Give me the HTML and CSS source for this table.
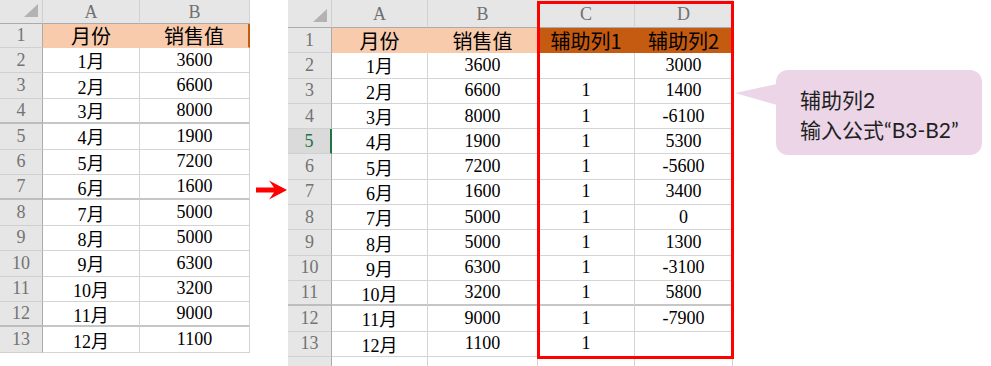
FILE: index.html
```html
<!DOCTYPE html>
<html lang="zh-CN">
<head>
<meta charset="utf-8">
<title>辅助列</title>
<link rel="stylesheet" href="styles.css">
</head>
<body>
<div class="page">
  <div class="sheet sheet-left">
    <div class="corner"><span class="tri"></span></div><div class="colh">A</div><div class="colh">B</div>
    <div class="rowh">1</div><div class="cell hdr">月份</div><div class="cell hdr hdr-edge">销售值</div>
    <div class="rowh">2</div><div class="cell">1月</div><div class="cell">3600</div>
    <div class="rowh">3</div><div class="cell">2月</div><div class="cell">6600</div>
    <div class="rowh thick">4</div><div class="cell thick">3月</div><div class="cell thick">8000</div>
    <div class="rowh">5</div><div class="cell">4月</div><div class="cell">1900</div>
    <div class="rowh">6</div><div class="cell">5月</div><div class="cell">7200</div>
    <div class="rowh thick">7</div><div class="cell thick">6月</div><div class="cell thick">1600</div>
    <div class="rowh">8</div><div class="cell">7月</div><div class="cell">5000</div>
    <div class="rowh">9</div><div class="cell">8月</div><div class="cell">5000</div>
    <div class="rowh">10</div><div class="cell">9月</div><div class="cell">6300</div>
    <div class="rowh">11</div><div class="cell">10月</div><div class="cell">3200</div>
    <div class="rowh thick">12</div><div class="cell thick">11月</div><div class="cell thick">9000</div>
    <div class="rowh">13</div><div class="cell">12月</div><div class="cell">1100</div>
  </div>

  <div class="arrow-gap">
    <svg class="arrow" width="32" height="22" viewBox="0 0 32 22">
      <polygon points="0,8.5 18,8.5 13,1.5 31,11 13,20.5 18,13.5 0,13.5" fill="#ff0000"/>
    </svg>
  </div>

  <div class="sheet sheet-right">
    <div class="corner"><span class="tri"></span></div><div class="colh">A</div><div class="colh">B</div><div class="colh">C</div><div class="colh">D</div>
    <div class="rowh">1</div><div class="cell hdr">月份</div><div class="cell hdr">销售值</div><div class="cell hdr dark">辅助列1</div><div class="cell hdr dark">辅助列2</div>
    <div class="rowh">2</div><div class="cell">1月</div><div class="cell">3600</div><div class="cell"></div><div class="cell">3000</div>
    <div class="rowh">3</div><div class="cell">2月</div><div class="cell">6600</div><div class="cell">1</div><div class="cell">1400</div>
    <div class="rowh">4</div><div class="cell">3月</div><div class="cell">8000</div><div class="cell">1</div><div class="cell">-6100</div>
    <div class="rowh active">5</div><div class="cell">4月</div><div class="cell">1900</div><div class="cell">1</div><div class="cell">5300</div>
    <div class="rowh">6</div><div class="cell">5月</div><div class="cell">7200</div><div class="cell">1</div><div class="cell">-5600</div>
    <div class="rowh">7</div><div class="cell">6月</div><div class="cell">1600</div><div class="cell">1</div><div class="cell">3400</div>
    <div class="rowh">8</div><div class="cell">7月</div><div class="cell">5000</div><div class="cell">1</div><div class="cell">0</div>
    <div class="rowh">9</div><div class="cell">8月</div><div class="cell">5000</div><div class="cell">1</div><div class="cell">1300</div>
    <div class="rowh">10</div><div class="cell">9月</div><div class="cell">6300</div><div class="cell">1</div><div class="cell">-3100</div>
    <div class="rowh thick">11</div><div class="cell thick">10月</div><div class="cell thick">3200</div><div class="cell thick">1</div><div class="cell thick">5800</div>
    <div class="rowh">12</div><div class="cell">11月</div><div class="cell">9000</div><div class="cell">1</div><div class="cell">-7900</div>
    <div class="rowh">13</div><div class="cell">12月</div><div class="cell">1100</div><div class="cell">1</div><div class="cell"></div>
    <div class="rowh"></div><div class="cell"></div><div class="cell"></div><div class="cell"></div><div class="cell"></div>
    <div class="redbox"></div>
  </div>

  <div class="note-area">
    <div class="note">辅助列2<br>输入公式“B3-B2”</div>
  </div>
</div>
</body>
</html>
```

FILE: styles.css
```css
* { box-sizing: border-box; }
html, body { margin: 0; padding: 0; background: #ffffff; }
body { width: 991px; height: 366px; overflow: hidden; }

.page {
  display: flex;
  align-items: flex-start;
  width: 991px;
  height: 366px;
}

.sheet {
  display: grid;
  font-family: "Liberation Serif", "Noto Sans CJK SC", serif;
  color: #000;
  position: relative;
}

.sheet-left {
  grid-template-columns: 43px 97px 110px;
  grid-template-rows: 24px 24px repeat(12, 25.4px);
  width: 250px;
}

.sheet-right {
  grid-template-columns: 44px 96px 110px 97px 98px;
  grid-template-rows: 28px repeat(13, 25.3px) 10px;
  width: 445px;
  margin-left: 38px;
}

.corner {
  background: #e6e6e6;
  border-right: 1px solid #cfcfcf;
  border-bottom: 1px solid #ababab;
  display: flex;
  justify-content: flex-end;
  align-items: flex-end;
  padding: 0 4px 6px 0;
}
.sheet-right .corner { padding: 0 4px 5px 0; }

.tri {
  width: 14px;
  height: 13px;
  background: #b3b3b3;
  clip-path: polygon(100% 0, 100% 100%, 0 100%);
}

.colh {
  background: #e6e6e6;
  border-right: 1px solid #d2d2d2;
  border-bottom: 1px solid #ababab;
  color: #707070;
  font-size: 18px;
  display: flex;
  align-items: center;
  justify-content: center;
  padding-top: 1px;
}

.rowh {
  background: #e6e6e6;
  border-right: 1px solid #ababab;
  border-bottom: 1px solid #d0d0d0;
  color: #737373;
  font-size: 18px;
  display: flex;
  align-items: center;
  justify-content: center;
}
.rowh.active {
  color: #217346;
  background: #dadada;
  border-right: 2px solid #217346;
}

.cell {
  border-right: 1px solid #d4d4d4;
  border-bottom: 1px solid #d4d4d4;
  font-size: 18px;
  display: flex;
  align-items: center;
  justify-content: center;
  white-space: nowrap;
}

.cell.hdr {
  background: #f8cbad;
  font-family: "Noto Sans CJK SC", sans-serif;
  font-size: 20px;
  border-right-color: #f8cbad;
  border-bottom-color: #f8cbad;
}
.cell.hdr.dark {
  background: #c55a11;
  border-right-color: #c55a11;
  border-bottom-color: #c55a11;
}
.cell.hdr-edge { border-right: 2px solid #c55a11; }

.thick { border-bottom-width: 2px; border-bottom-color: #c6c6c6; }
.rowh.thick { border-bottom-color: #bdbdbd; }

.redbox {
  position: absolute;
  left: 249px;
  top: 1px;
  width: 197px;
  height: 358px;
  border: 3px solid #ff0000;
  pointer-events: none;
}

.arrow-gap {
  display: block;
  width: 0;
  height: 366px;
  position: relative;
}
.arrow {
  position: absolute;
  left: 6px;
  top: 179px;
}

.note-area {
  padding: 70px 0 0 43px;
}

.note {
  position: relative;
  width: 206px;
  height: 85px;
  background: #ebd5e7;
  border-radius: 12px;
  padding: 15px 0 0 24px;
  font-family: "Lato", "Noto Sans CJK SC", sans-serif;
  font-size: 21px;
  line-height: 30px;
  color: #1f1f1f;
  white-space: nowrap;
}
.note::before {
  content: "";
  position: absolute;
  left: -41px;
  top: 14px;
  width: 42px;
  height: 21px;
  background: #ebd5e7;
  clip-path: polygon(0 9px, 100% 0, 100% 100%);
}
```
